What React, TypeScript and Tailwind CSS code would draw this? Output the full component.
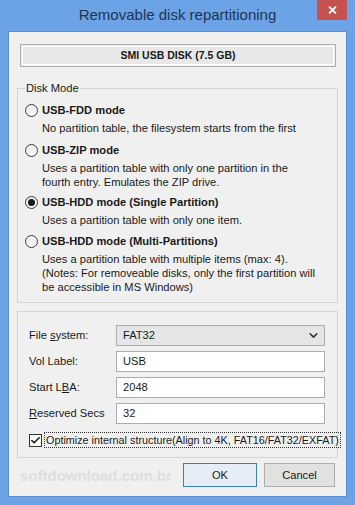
import { Check, ChevronDown } from 'lucide-react';

const modes = [
  {
    label: 'USB-FDD mode',
    lines: ['No partition table, the filesystem starts from the first'],
    checked: false,
    mt: 'mt-[6px]',
  },
  {
    label: 'USB-ZIP mode',
    lines: ['Uses a partition table with only one partition in the', 'fourth entry. Emulates the ZIP drive.'],
    checked: false,
    mt: 'mt-[7px]',
  },
  {
    label: 'USB-HDD mode (Single Partition)',
    lines: ['Uses a partition table with only one item.'],
    checked: true,
    mt: 'mt-[5px]',
  },
  {
    label: 'USB-HDD mode (Multi-Partitions)',
    lines: [
      'Uses a partition table with multiple items (max: 4).',
      '(Notes: For removeable disks, only the first partition will',
      'be accessible in MS Windows)',
    ],
    checked: false,
    mt: 'mt-[6px]',
  },
];

const Radio = ({ checked }: { checked: boolean }) => (
  <span className="w-[13px] h-[13px] rounded-full border border-[#3c3c3c] bg-gradient-to-br from-[#e6e6e6] to-white flex items-center justify-center shrink-0">
    {checked && <span className="w-[7px] h-[7px] rounded-full bg-[#1a1a1a]" />}
  </span>
);

const Field = ({ label, value }: { label: React.ReactNode; value: string }) => (
  <div className="flex items-center h-[21px]">
    <span className="w-[87px] shrink-0">{label}</span>
    <div className="flex-1 h-[21px] bg-white border border-[#abadb3] pl-[6px] flex items-center">{value}</div>
  </div>
);

export default function App() {
  return (
    <div
      className="w-[355px] h-[505px] bg-[#6ba3e6] flex flex-col px-[8px] pb-[8px] text-[11.15px] text-[#1a1a1a]"
      style={{ fontFamily: '"Liberation Sans", Arial, sans-serif' }}
    >
      {/* title bar */}
      <div className="h-[31px] relative flex items-center justify-center shrink-0">
        <span className="text-[15px] text-[#1e3552] -mt-[1px]">Removable disk repartitioning</span>
        <div className="absolute top-0 right-0 w-[30px] h-[20px] bg-[#c75050] flex items-center justify-center">
          <svg width="9" height="8" viewBox="0 0 9 8">
            <path d="M1 0.5 L8 7.5 M8 0.5 L1 7.5" stroke="white" strokeWidth="1.8" />
          </svg>
        </div>
      </div>

      <div className="flex-1 bg-[#f0f0f0] border border-[#5d8ecb] flex flex-col">
        <div className="mt-[12px] ml-[11px] mr-[10px] h-[23px] border border-[#adadad] p-px">
          <div className="h-full bg-[#e8e8e8] border border-white flex items-center justify-center font-bold text-[10.5px]">
            SMI USB DISK (7.5 GB)
          </div>
        </div>

        <fieldset className="mt-[13px] mx-[8px] border border-[#d5d5d5] px-[7px] pb-[5px] h-[223px]">
          <legend className="px-[1px] leading-[16px]">Disk Mode</legend>
          {modes.map((m) => (
            <div key={m.label} className={m.mt}>
              <div className="flex items-center gap-[4px] h-[16px]">
                <Radio checked={m.checked} />
                <span className="font-bold">{m.label}</span>
              </div>
              <div className="pl-[17px] mt-[3px] leading-[14px]">
                {m.lines.map((l) => (
                  <div key={l}>{l}</div>
                ))}
              </div>
            </div>
          ))}
        </fieldset>

        <div className="mt-[8px] mx-[8px] border border-[#d5d5d5] h-[147px] pt-[13px] pl-[11px] pr-[12px] flex flex-col gap-[5px]">
          <div className="flex items-center h-[21px]">
            <span className="w-[87px] shrink-0">
              File <u>s</u>ystem:
            </span>
            <div className="flex-1 h-[21px] bg-[#e5e5e5] border border-[#acacac] pl-[6px] pr-[4px] flex items-center justify-between">
              <span>FAT32</span>
              <ChevronDown size={13} strokeWidth={3} className="text-[#3a3a3a]" />
            </div>
          </div>
          <Field label="Vol Label:" value="USB" />
          <Field
            label={
              <>
                Start L<u>B</u>A:
              </>
            }
            value="2048"
          />
          <Field
            label={
              <>
                <u>R</u>eserved Secs
              </>
            }
            value="32"
          />
          <div className="flex items-center mt-[3px]">
            <span className="w-[13px] h-[13px] border border-[#333] bg-white flex items-center justify-center shrink-0">
              <Check size={11} strokeWidth={3.5} className="text-[#1a1a1a]" />
            </span>
            <span className="ml-[2px] border border-dotted border-[#333] px-px leading-[14px] whitespace-nowrap text-[10.8px]">
              Optimize internal structure(Align to 4K, FAT16/FAT32/EXFAT)
            </span>
          </div>
        </div>

        <div className="flex items-center mt-[5px] ml-[11px] mr-[11px]">
          <span className="text-[15px] font-bold text-[#dedede] flex-1 mt-[2px]">softdownload.com.br</span>
          <button className="w-[74px] h-[24px] border border-[#3c7fb1] bg-[#e5eef6] mr-[7px]">OK</button>
          <button className="w-[71px] h-[24px] border border-[#adadad] bg-[#e1e1e1]">Cancel</button>
        </div>
      </div>
    </div>
  );
}
